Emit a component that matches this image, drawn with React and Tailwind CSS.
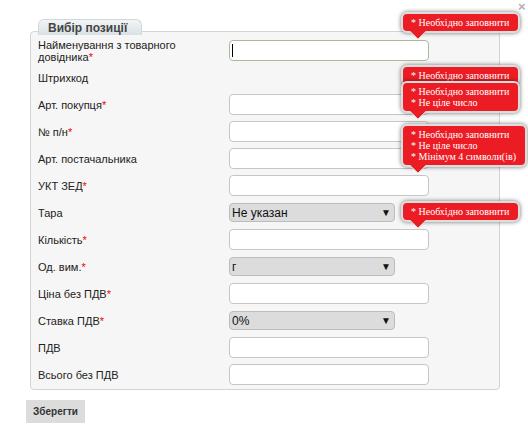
import React from "react";

const rows = [
  { label: "Найменування з товарного довідника", req: true, type: "input", focus: true },
  { label: "Штрихкод", type: "none" },
  { label: "Арт. покупця", req: true, type: "input" },
  { label: "№ п/н", req: true, type: "input" },
  { label: "Арт. постачальника", type: "input" },
  { label: "УКТ ЗЕД", req: true, type: "input" },
  { label: "Тара", type: "select", value: "Не указан" },
  { label: "Кількість", req: true, type: "input" },
  { label: "Од. вим.", req: true, type: "select", value: "г" },
  { label: "Ціна без ПДВ", req: true, type: "input" },
  { label: "Ставка ПДВ", req: true, type: "select", value: "0%" },
  { label: "ПДВ", type: "input" },
  { label: "Всього без ПДВ", type: "input" },
];

// validation bubbles, page coordinates
const errors = [
  { top: 12, lines: ["Необхідно заповнити"] },
  { top: 65, lines: ["Необхідно заповнити"] },
  { top: 81, lines: ["Необхідно заповнити", "Не ціле число"] },
  { top: 124, lines: ["Необхідно заповнити", "Не ціле число", "Мінімум 4 символи(ів)"] },
  { top: 201, lines: ["Необхідно заповнити"] },
];

const Field = ({ row }) => {
  if (row.type === "none") return null;
  if (row.type === "select") {
    return (
      <div className="w-[166px] h-[19px] bg-[#dcdcdc] border border-[#bcbcbc] rounded-[4px] flex items-center justify-between pl-[2px] pr-[3px] text-[12px] text-[#111]">
        <span>{row.value}</span>
        <span className="text-[10px] leading-none">▼</span>
      </div>
    );
  }
  return (
    <div
      className={`w-[200px] h-[21px] bg-white rounded-[4px] border flex items-center pl-[2px] ${
        row.focus ? "border-[#a9bb99]" : "border-[#c6c6c6]"
      }`}
    >
      {row.focus && <span className="w-px h-[13px] bg-black" />}
    </div>
  );
};

const ErrorBubble = ({ top, lines }) => (
  <div className="absolute z-10 left-[401px]" style={{ top }}>
    <div className="relative z-10 bg-[#ec1c24] border-2 border-[#dddddd] rounded-[6px] shadow-[0_0_4px_rgba(0,0,0,0.55)] pl-[8px] pr-[9px] py-[3px] text-white text-[10px] leading-[11px] font-['Liberation_Serif',serif] whitespace-nowrap">
      {lines.map((l) => (
        <div key={l}>* {l}</div>
      ))}
    </div>
    <svg className="absolute left-[9px] top-full -mt-[2px] z-20" width="16" height="9" viewBox="0 0 16 9">
      <polygon points="0,0 16,0 8,8" fill="#ec1c24" />
      <polyline points="0,0.5 8,8 16,0.5" fill="none" stroke="#dddddd" strokeWidth="1" />
    </svg>
  </div>
);

export default function App() {
  return (
    <div className="relative w-[528px] h-[443px] bg-white overflow-hidden font-['Liberation_Sans',Arial,sans-serif] text-[#222]">
      <div className="pl-[30px] pt-[19px]">
        <div className="relative z-[5] ml-[8px] w-[104px] h-[16px] rounded-t-[6px] border border-b-0 border-[#d0d8da] bg-gradient-to-b from-[#f2f5f6] to-[#d9e1e4] pl-[9px] text-[12px] font-bold leading-[16px] text-[#444]">
          Вибір позиції
        </div>
        <div className="-mt-[4px] w-[470px] border border-[#d4d4d4] rounded-[4px] bg-[#f6f6f6] pt-[5px] pb-px pl-[7px]">
          {rows.map((row) => (
            <div key={row.label} className="flex items-center h-[27px]">
              <div className="w-[191px] pr-[40px] text-[11px] leading-[12px]">
                {row.label}
                {row.req && <span className="text-[#e00]">*</span>}
              </div>
              <Field row={row} />
            </div>
          ))}
        </div>
        <button className="mt-[10px] -ml-[4px] w-[59px] h-[23px] bg-[#dcdcdc] text-[10px] font-bold text-[#333]">
          Зберегти
        </button>
      </div>

      {errors.map((e) => (
        <ErrorBubble key={e.top} top={e.top} lines={e.lines} />
      ))}

      <span className="absolute left-[518px] top-0 text-[13px] font-bold leading-[13px] text-[#b0b0b0]">×</span>
    </div>
  );
}
